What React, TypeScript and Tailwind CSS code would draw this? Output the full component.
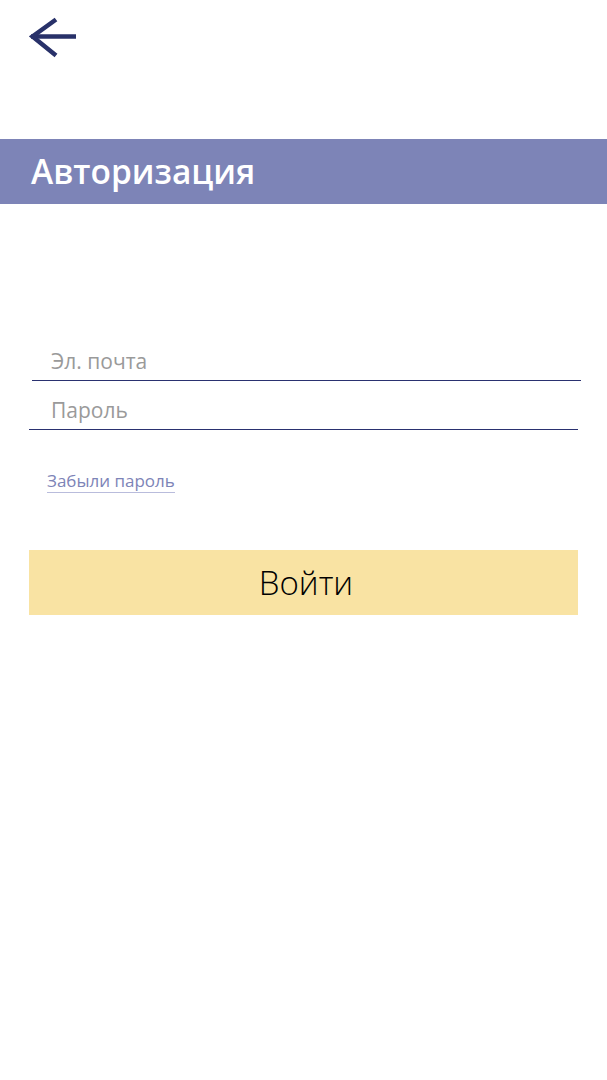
export default function App() {
  return (
    <div className="min-h-[1080px] w-full bg-white font-['Open_Sans','Noto_Sans',sans-serif]">
      {/* back arrow */}
      <div className="px-[29px] pt-[17px]">
        <button className="block h-[42px] w-[50px]" aria-label="Назад">
          <svg width="50" height="42" viewBox="0 0 50 42" fill="none">
            <path d="M2 19.5H47" stroke="#283169" strokeWidth="4.5" />
            <path d="M27 2.5L3.5 19.5L27 38.5" stroke="#283169" strokeWidth="4.5" />
          </svg>
        </button>
      </div>

      {/* title band */}
      <div className="mt-[80px] flex h-[65px] items-center bg-[#7d84b7] px-[31px]">
        <h1 className="text-[33.5px] font-semibold leading-none text-white">Авторизация</h1>
      </div>

      {/* form */}
      <div className="mt-[142px] flex flex-col">
        <div className="ml-[32px] mr-[26px] border-b border-[#2a3170] pb-[4px] pl-[19px]">
          <input
            placeholder="Эл. почта"
            className="w-full bg-transparent text-[21px] leading-[30px] text-gray-800 outline-none placeholder:text-[#9a9a9a]"
          />
        </div>
        <div className="ml-[29px] mr-[29px] mt-[14px] border-b border-[#2a3170] pb-[4px] pl-[22px]">
          <input
            type="password"
            placeholder="Пароль"
            className="w-full bg-transparent text-[21px] leading-[30px] text-gray-800 outline-none placeholder:text-[#9a9a9a]"
          />
        </div>

        <a
          href="#"
          className="ml-[47px] mt-[40px] self-start border-b border-[#b9bcdc] text-[17px] leading-[22px] text-[#7d84b7]"
        >
          Забыли пароль
        </a>

        <button className="mx-[29px] mt-[57px] flex h-[65px] items-center justify-center bg-[#f9e3a3] pl-[5px] text-[33px] font-light text-black">
          Войти
        </button>
      </div>
    </div>
  );
}
